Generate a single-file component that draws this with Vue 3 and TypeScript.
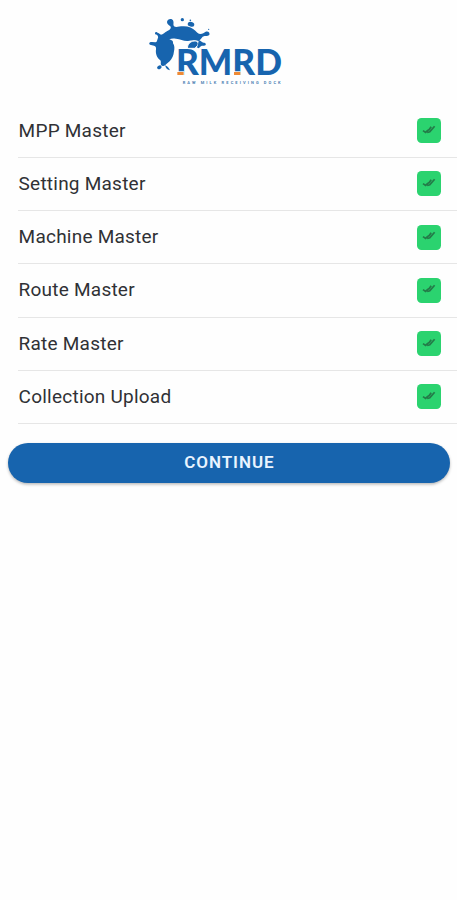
<script setup lang="ts">
interface SyncItem {
  id: number
  label: string
}

const items: SyncItem[] = [
  'MPP Master',
  'Setting Master',
  'Machine Master',
  'Route Master',
  'Rate Master',
  'Collection Upload',
].map((label, id) => ({ id, label }))
</script>

<template>
  <main class="screen">
    <header class="brand">
      <svg class="logo" viewBox="0 0 450 240" role="img" aria-label="RMRD">
        <g class="splash">
          <path
            d="M80 161 C76 165 72 170 66 167 C59 164 65 156 61 151 C50 143 46 130 48 118 C49 112 47 108 42 107 L30 104 C25 100 29 95 36 96 L46 97 C51 97 51 91 53 86 C55 82 55 80 52 76 L48 70 L55 69 L63 74 C69 73 75 67 82 63 C90 59 95 55 91 49 C85 45 81 41 81 36 C82 27 94 24 99 31 C103 38 98 44 102 49 C108 54 118 49 128 49 C144 48 158 54 166 62 C171 68 175 71 181 72 C188 72 192 68 197 65 C204 62 211 68 208 75 C203 80 196 76 188 80 C184 84 181 89 177 93 C164 90 155 91 144 93 C130 94 122 87 108 86 C100 85 93 85 88 88 C96 90 101 94 99 100 C104 107 104 116 102 124 C101 137 96 147 89 154 Z"
          />
          <ellipse cx="153" cy="43" rx="10" ry="7" transform="rotate(15 153 43)" />
          <circle cx="127" cy="29" r="5" />
          <circle cx="151" cy="31" r="2.5" />
          <circle cx="49" cy="70" r="4" />
          <circle cx="206" cy="58" r="2" />
          <ellipse cx="58" cy="172" rx="7" ry="5.5" transform="rotate(-25 58 172)" />
          <path d="M75 166 C82 168 86 173 90 181 C83 180 78 176 75 166 Z" />
          <path class="face" d="M142 115 C143 103 149 95 162 93 C172 92 177 98 173 106 L165 115 Z" />
          <path d="M177 91 C183 93 185 97 191 98 C199 98 200 106 192 107 C187 107 184 106 181 110 L176 115 L170 112 C176 107 173 99 177 91 Z" />
        </g>
        <text class="wordmark" x="108" y="195" textLength="318" lengthAdjust="spacingAndGlyphs">RMRD</text>
        <path class="cut" d="M111 184 H133 V198 H111 Z M281 184 H302 V198 H281 Z" />
        <path class="accent" d="M112 186 H131 V195 H112 Z M282 186 H301 V195 H282 Z" />
        <text class="tagline" x="128" y="222" textLength="294">RAW MILK RECEIVING DOCK</text>
      </svg>
    </header>

    <ul class="list">
      <li v-for="item in items" :key="item.id" class="row">
        <span class="label">{{ item.label }}</span>
        <span class="status">
          <svg class="ticks" viewBox="0 0 14 10">
            <path d="M1 5.6 L3.6 7.4 L5.4 5.6 L7.2 4.6 L9.2 1.8 M5.2 7.5 L7.8 6.8 L12.6 1.2" />
          </svg>
        </span>
      </li>
    </ul>

    <button class="continue" type="button">CONTINUE</button>
  </main>
</template>

<style>
body {
  background: #fefefe;
}
</style>

<style scoped>
.screen {
  box-sizing: border-box;
  min-height: 900px;
  padding-top: 10px;
  font-family: Roboto, sans-serif;
}

.brand {
  height: 94.5px;
  padding-left: 140px;
}

.logo {
  display: block;
  width: 150px;
  height: 80px;
}

.splash {
  fill: #1764ae;
}

.face {
  stroke: #fefefe;
  stroke-width: 3px;
}

.cut {
  fill: #fefefe;
}

.wordmark {
  font-family: Lato, sans-serif;
  font-size: 108px;
  font-weight: 900;
  fill: #1764ae;
  stroke: #fefefe;
  stroke-width: 3px;
  paint-order: stroke;
}

.accent {
  fill: #ee8a35;
}

.tagline {
  font-size: 12px;
  font-weight: 700;
  fill: #4e83b4;
}

.list {
  margin: 0;
  padding: 0 0 0 18px;
  list-style: none;
}

.row {
  box-sizing: border-box;
  display: flex;
  align-items: center;
  justify-content: space-between;
  height: 53.25px;
  padding-right: 16px;
  border-bottom: 1.5px solid #e6e6e6;
}

.label {
  padding-left: 0.6px;
  color: #303135;
  font-size: 19px;
  line-height: 24px;
  letter-spacing: 0.23px;
}

.status {
  display: flex;
  justify-content: center;
  box-sizing: border-box;
  width: 24px;
  height: 25px;
  padding-top: 6.5px;
  border-radius: 4.5px;
  background: #2bd36f;
}

.ticks {
  width: 14px;
  height: 10px;
  fill: none;
  stroke: #247a48;
  stroke-width: 1.7;
}

.continue {
  display: block;
  width: 442px;
  height: 39.5px;
  margin: 19px 0 0 8.4px;
  padding: 0 0 2px;
  border: 0;
  border-radius: 20px;
  background: #1764ae;
  box-shadow: 0 1.5px 3px rgb(0 0 0 / 28%);
  color: #e9f4ff;
  font-family: inherit;
  font-size: 17px;
  font-weight: 600;
  letter-spacing: 0.95px;
}
</style>
